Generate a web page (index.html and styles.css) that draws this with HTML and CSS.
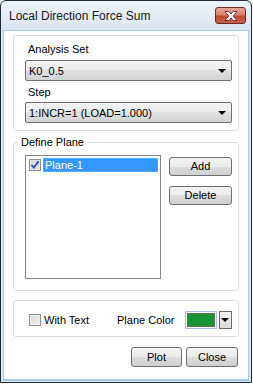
FILE: index.html
```html
<!DOCTYPE html>
<html lang="en">

<head>
    <meta charset="UTF-8">
    <title>Local Direction Force Sum</title>
    <link rel="stylesheet" href="styles.css">
</head>

<body>
    <div class="window">
        <div class="titlebar">
            <span class="title">Local Direction Force Sum</span>
            <div class="close-btn">
                <svg width="16" height="10" viewBox="0 0 16 10">
                    <path d="M2 0.5 L6 0.5 L8 3 L10 0.5 L14 0.5 L10.2 5 L14 9.5 L10 9.5 L8 7 L6 9.5 L2 9.5 L5.8 5 Z"
                        fill="#fff" stroke="#5a1a12" stroke-width="0.8" stroke-linejoin="round" />
                </svg>
            </div>
        </div>

        <div class="client">
            <div class="group">
                <label class="label">Analysis Set</label>
                <div class="combo">
                    <span>K0_0.5</span>
                    <span class="arrow"></span>
                </div>
                <label class="label step">Step</label>
                <div class="combo combo-step">
                    <span>1:INCR=1 (LOAD=1.000)</span>
                    <span class="arrow"></span>
                </div>
            </div>

            <fieldset class="group plane-group">
                <legend>Define Plane</legend>
                <div class="plane-row">
                    <div class="listbox">
                        <div class="list-item">
                            <svg class="check" width="12" height="12" viewBox="0 0 12 12">
                                <rect x="0.5" y="0.5" width="11" height="11" fill="#e4e4e4" stroke="#8f8f8f" />
                                <rect x="1.5" y="1.5" width="9" height="9" fill="#dcdcdc" />
                                <path d="M2.5 6 L4.8 8.6 L9.6 2.2" fill="none" stroke="#2350b8" stroke-width="1.8" />
                            </svg>
                            <span class="item-text">Plane-1</span>
                        </div>
                    </div>
                    <div class="side-buttons">
                        <button class="btn">Add</button>
                        <button class="btn btn-delete">Delete</button>
                    </div>
                </div>
            </fieldset>

            <div class="group options">
                <span class="checkbox"></span>
                <span class="opt-text">With Text</span>
                <span class="opt-text color-label">Plane Color</span>
                <div class="swatch"><div class="swatch-fill"></div></div>
                <div class="drop-btn"><span class="arrow"></span></div>
            </div>

            <div class="footer">
                <button class="btn btn-plot">Plot</button>
                <button class="btn btn-close">Close</button>
            </div>
        </div>
    </div>
</body>

</html>
```

FILE: styles.css
```css
* {
    margin: 0;
    padding: 0;
    box-sizing: border-box;
}

body {
    background-color: #ffffff;
    font-family: 'Liberation Sans', Arial, sans-serif;
    font-size: 11px;
    color: #000;
}

.window {
    width: 252px;
    height: 383px;
    border: 1px solid #1e2a36;
    border-radius: 6px 6px 0 0;
    background: linear-gradient(#eef3f9, #d9e4f1 30px, #d9e4f1);
    display: flex;
    flex-direction: column;
}

.titlebar {
    height: 29px;
    display: flex;
    align-items: flex-start;
    justify-content: space-between;
    padding: 0 5px 0 8px;
}

.title {
    font-size: 12px;
    line-height: 16px;
    margin-top: 7px;
    color: #1a1a1a;
}

.close-btn {
    width: 31px;
    height: 17px;
    margin-top: 6px;
    border: 1px solid #6b2a22;
    border-radius: 3px;
    background: linear-gradient(#e7a698, #d9826f 45%, #c0492f 55%, #c9624a);
    display: flex;
    align-items: center;
    justify-content: center;
}

.client {
    flex-grow: 1;
    margin: 0 2px 1px 2px;
    border: 1px solid #a9c9ea;
    border-bottom-width: 2px;
    background-color: #fff;
    padding: 4px 9px 0 9px;
    display: flex;
    flex-direction: column;
}

.group {
    border: 1px solid #d5dfe5;
    border-radius: 3px;
    padding: 6px 5px 7px 11px;
    display: flex;
    flex-direction: column;
}

.label {
    display: block;
    line-height: 14px;
    margin-left: 3px;
}

.label.step {
    margin-top: 4px;
}

.combo {
    margin-top: 4px;
    height: 21px;
    width: 207px;
    border: 1px solid #707070;
    border-radius: 2px;
    background: linear-gradient(#f3f3f3, #ececec 50%, #dfe0e0 50%, #d2d4d4);
    display: flex;
    align-items: center;
    justify-content: space-between;
    padding: 0 5px 0 3px;
    line-height: 14px;
}

.combo-step {
    margin-top: 3px;
}

.arrow {
    width: 0;
    height: 0;
    border-left: 4px solid transparent;
    border-right: 4px solid transparent;
    border-top: 4px solid #000;
}

.plane-group {
    margin-top: 4px;
    padding: 6px 5px 11px 4px;
}

.plane-group legend {
    padding: 0 3px;
    line-height: 14px;
}

.plane-row {
    display: flex;
    align-items: flex-start;
    margin-left: 7px;
}

.listbox {
    width: 136px;
    height: 124px;
    border: 1px solid #828790;
    padding: 2px;
}

.list-item {
    display: flex;
    align-items: center;
    height: 14px;
}

.check {
    margin-left: 1px;
    flex-shrink: 0;
}

.item-text {
    flex-grow: 1;
    height: 14px;
    margin-left: 2px;
    background-color: #3399ff;
    color: #fff;
    line-height: 12px;
    padding-left: 1px;
    border: 1px dotted #e8a04a;
}

.side-buttons {
    margin-left: 8px;
    margin-top: 2px;
    display: flex;
    flex-direction: column;
}

.btn {
    font-family: 'Liberation Sans', Arial, sans-serif;
    font-size: 11px;
    color: #000;
    width: 63px;
    height: 19px;
    border: 1px solid #707070;
    border-radius: 3px;
    background: linear-gradient(#f3f3f3, #ebebeb 50%, #dddddd 50%, #cfcfcf);
    line-height: 15px;
}

.btn-delete {
    margin-top: 10px;
}

.options {
    margin-top: 9px;
    flex-direction: row;
    align-items: center;
    padding: 10px 0 7px 15px;
}

.options > * {
    flex-shrink: 0;
}

.checkbox {
    width: 12px;
    height: 12px;
    border: 1px solid #8f8f8f;
    background: linear-gradient(135deg, #d8d8d8, #f4f4f4);
    box-shadow: inset 0 0 0 1px #f0f0f0;
}

.opt-text {
    margin-left: 3px;
    line-height: 14px;
    white-space: nowrap;
}

.color-label {
    margin-left: 28px;
}

.swatch {
    margin-left: 10px;
    width: 32px;
    height: 18px;
    border: 1px solid #a9c3e6;
    padding: 1px;
}

.swatch-fill {
    width: 100%;
    height: 100%;
    background-color: #1b9435;
    border: 1px solid #5f6f62;
}

.drop-btn {
    margin-left: 2px;
    width: 13px;
    height: 18px;
    border: 1px solid #6c6c6c;
    background: linear-gradient(#f4f4f4, #dcdcdc);
    display: flex;
    align-items: center;
    justify-content: center;
}

.footer {
    margin-top: 10px;
    display: flex;
    justify-content: flex-end;
    padding-right: 1px;
}

.btn-plot {
    width: 51px;
    height: 20px;
}

.btn-close {
    width: 52px;
    height: 20px;
    margin-left: 4px;
}
```
